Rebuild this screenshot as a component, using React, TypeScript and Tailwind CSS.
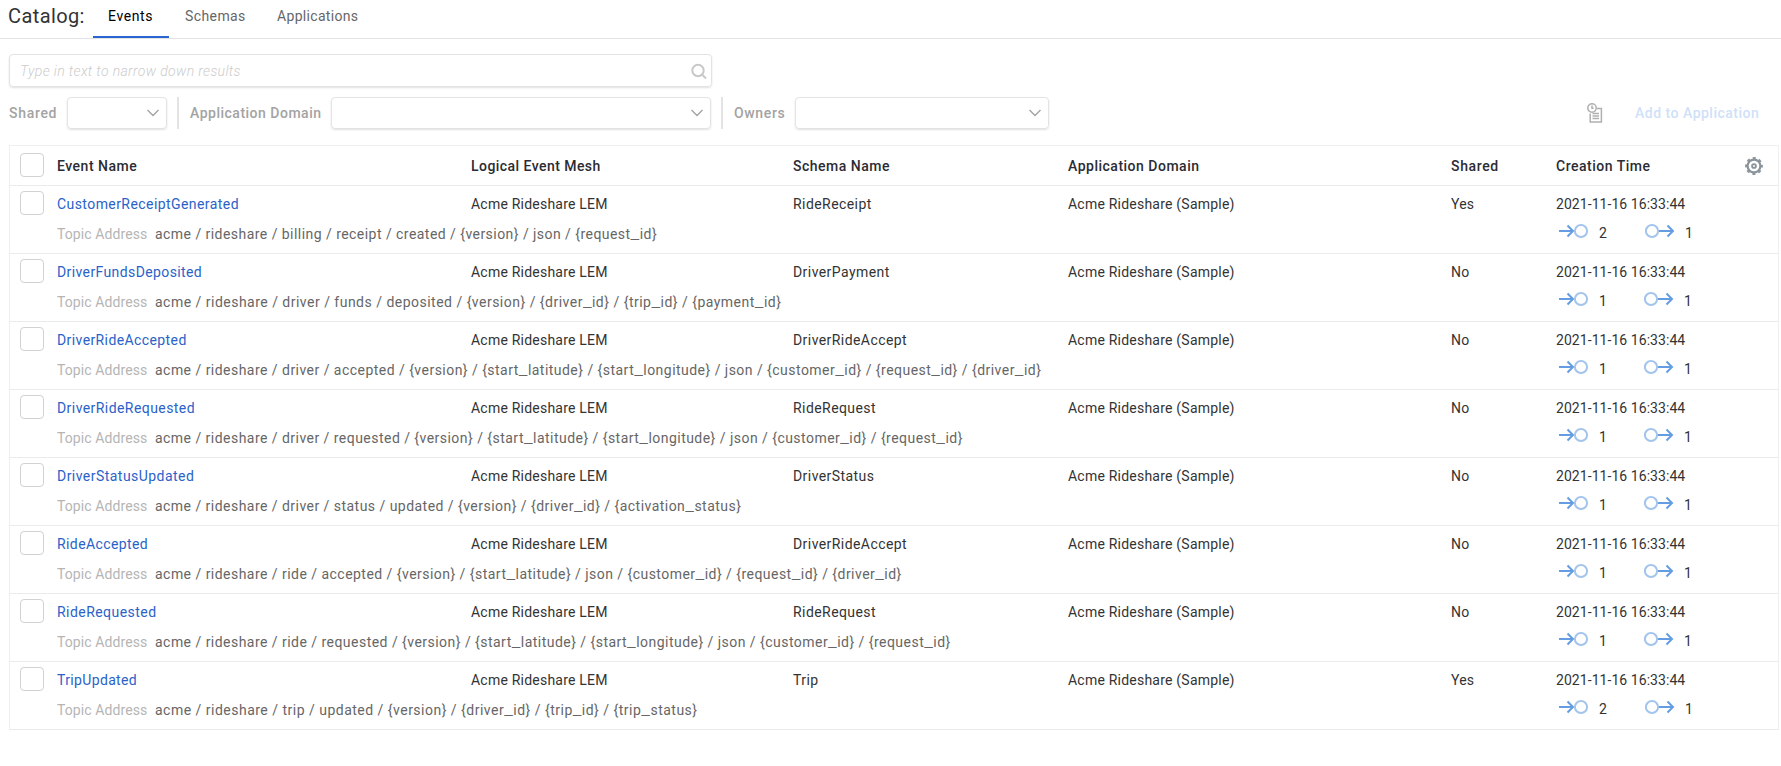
import React from "react";

type EventRow = {
  name: string;
  nameSpacing: string;
  schema: string;
  shared: string;
  topic: string;
  topicSpacing: string;
  published: number;
  subscribed: number;
};

const rows: EventRow[] = [
  { name: "CustomerReceiptGenerated", nameSpacing: "tracking-[0.43px]", schema: "RideReceipt", shared: "Yes", topic: "acme / rideshare / billing / receipt / created / {version} / json / {request_id}", topicSpacing: "tracking-[0.455px]", published: 2, subscribed: 1 },
  { name: "DriverFundsDeposited", nameSpacing: "tracking-[0.39px]", schema: "DriverPayment", shared: "No", topic: "acme / rideshare / driver / funds / deposited / {version} / {driver_id} / {trip_id} / {payment_id}", topicSpacing: "tracking-[0.485px]", published: 1, subscribed: 1 },
  { name: "DriverRideAccepted", nameSpacing: "tracking-[0.4px]", schema: "DriverRideAccept", shared: "No", topic: "acme / rideshare / driver / accepted / {version} / {start_latitude} / {start_longitude} / json / {customer_id} / {request_id} / {driver_id}", topicSpacing: "tracking-[0.467px]", published: 1, subscribed: 1 },
  { name: "DriverRideRequested", nameSpacing: "tracking-[0.43px]", schema: "RideRequest", shared: "No", topic: "acme / rideshare / driver / requested / {version} / {start_latitude} / {start_longitude} / json / {customer_id} / {request_id}", topicSpacing: "tracking-[0.465px]", published: 1, subscribed: 1 },
  { name: "DriverStatusUpdated", nameSpacing: "tracking-[0.46px]", schema: "DriverStatus", shared: "No", topic: "acme / rideshare / driver / status / updated / {version} / {driver_id} / {activation_status}", topicSpacing: "tracking-[0.465px]", published: 1, subscribed: 1 },
  { name: "RideAccepted", nameSpacing: "tracking-[0.4px]", schema: "DriverRideAccept", shared: "No", topic: "acme / rideshare / ride / accepted / {version} / {start_latitude} / json / {customer_id} / {request_id} / {driver_id}", topicSpacing: "tracking-[0.467px]", published: 1, subscribed: 1 },
  { name: "RideRequested", nameSpacing: "tracking-[0.45px]", schema: "RideRequest", shared: "No", topic: "acme / rideshare / ride / requested / {version} / {start_latitude} / {start_longitude} / json / {customer_id} / {request_id}", topicSpacing: "tracking-[0.467px]", published: 1, subscribed: 1 },
  { name: "TripUpdated", nameSpacing: "tracking-[0.35px]", schema: "Trip", shared: "Yes", topic: "acme / rideshare / trip / updated / {version} / {driver_id} / {trip_id} / {trip_status}", topicSpacing: "tracking-[0.49px]", published: 2, subscribed: 1 },
];

const columns = "grid grid-cols-[47px_414px_322px_275px_382px_106px_1fr]";

function Select({ className }: { className: string }) {
  return (
    <div className={`flex h-8 items-center justify-end rounded-[4px] border border-[#e3e3e3] pr-[7px] shadow-[0_1px_2px_rgba(0,0,0,0.12)] ${className}`}>
      <svg width="12" height="8" viewBox="0 0 12 8" fill="none" stroke="#a3a3a3" strokeWidth="1.4">
        <path d="M0.5 1 L6 6.5 L11.5 1" />
      </svg>
    </div>
  );
}

function Checkbox() {
  return <span className="block size-6 rounded-[4px] border border-[#d2d2d2] bg-white" />;
}

// Underscores are set wider so that placeholder names stay legible.
function Topic({ value }: { value: string }) {
  return (
    <>
      {value.split("_").map((part, i) => (
        <React.Fragment key={i}>
          {i > 0 && <span className="text-[20px] leading-[0] font-light tracking-[0.45px]">_</span>}
          {part}
        </React.Fragment>
      ))}
    </>
  );
}

function InIcon() {
  return (
    <svg width="30" height="16" viewBox="0 0 30 16" fill="none">
      <path d="M0 8 H14 M8.5 2.5 L14 8 L8.5 13.5" stroke="#659de2" strokeWidth="2" />
      <circle cx="22" cy="8" r="6.1" stroke="#a3c4ec" strokeWidth="2" />
    </svg>
  );
}

function OutIcon() {
  return (
    <svg width="30" height="16" viewBox="0 0 30 16" fill="none">
      <path d="M14 8 H28 M22.5 2.5 L28 8 L22.5 13.5" stroke="#659de2" strokeWidth="2" />
      <circle cx="7" cy="8" r="6.1" stroke="#a3c4ec" strokeWidth="2" />
    </svg>
  );
}

function GearIcon() {
  return (
    <svg width="18" height="18" viewBox="0 0 18 18" fill="none" stroke="#8a949c">
      <circle cx="9" cy="9" r="6.4" strokeWidth="2.2" />
      <circle cx="9" cy="9" r="7.9" strokeWidth="2" strokeDasharray="3.1 3.104" strokeDashoffset="1.55" />
      <circle cx="9" cy="9" r="1.9" strokeWidth="1.9" />
    </svg>
  );
}

export default function App() {
  return (
    <div className="h-[766px] w-[1781px] overflow-hidden bg-white font-['Roboto',sans-serif] text-sm leading-5 text-[#333]">
      <header className="flex h-[39px] border-b border-[#e3e3e3] pl-2">
        <h1 className="w-[85px] pt-1 text-[20px] leading-6 tracking-[0.4px] whitespace-nowrap text-[#333]">Catalog:</h1>
        <nav className="flex whitespace-nowrap">
          <span className="h-[38px] w-[76px] border-b-2 border-[#2a66d1] pt-[6px] pl-[15px] tracking-[0.6px] text-black">Events</span>
          <span className="w-[92px] pt-[6px] pl-4 tracking-[0.4px] text-[#666]">Schemas</span>
          <span className="pt-[6px] pl-4 tracking-[0.32px] text-[#666]">Applications</span>
        </nav>
      </header>

      <div className="pt-[15px] pl-[9px]">
        <div className="flex h-[33px] w-[703px] items-center justify-between rounded-[4px] border border-[#e3e3e3] pr-1 pl-[10px] shadow-[0_1px_2px_rgba(0,0,0,0.12)]">
          <span className="pt-px font-light tracking-[0.36px] text-[#ccc] italic">Type in text to narrow down results</span>
          <svg width="16" height="16" viewBox="0 0 16 16" fill="none" stroke="#c8c8c8" strokeWidth="2">
            <circle cx="7" cy="7.5" r="5.7" />
            <path d="M11 11.5 L15 15.5" />
          </svg>
        </div>
      </div>

      <div className="mt-[10px] flex h-8 items-center pl-[9px] font-medium tracking-[0.5px] whitespace-nowrap text-[#a3a3a3]">
        <span className="w-[58px] tracking-[0.7px]">Shared</span>
        <Select className="w-[100px]" />
        <span className="mr-[11px] ml-[10px] h-8 w-[2px] bg-[#e3e3e3]" />
        <span className="w-[141px]">Application Domain</span>
        <Select className="w-[380px]" />
        <span className="mr-[11px] ml-[10px] h-8 w-[2px] bg-[#e3e3e3]" />
        <span className="w-[61px] tracking-[0.65px]">Owners</span>
        <Select className="w-[254px]" />
        <svg className="ml-[538px]" width="16" height="20" viewBox="0 0 16 20" fill="none" stroke="#b0b0b0" strokeWidth="1.5">
          <circle cx="5" cy="5" r="4.2" />
          <path d="M5 2.5 V5.3 H6.6 M10 5.4 H14.4 V19 H3.2 V10.5 M5.5 10.5 H12 M5.5 13 H12 M5.5 15.5 H12" />
        </svg>
        <span className="-mt-px ml-8 text-[#cfe1f8]">Add to Application</span>
      </div>

      <section className="mt-4 ml-[9px] w-[1770px] border-x border-t border-[#efefef]">
        <div className={`${columns} h-10 items-center border-b border-[#ebebeb] font-medium tracking-[0.5px] text-[#2b2b33]`}>
          <span className="-mt-px pl-[10px]"><Checkbox /></span>
          <span>Event Name</span>
          <span className="tracking-[0.45px]">Logical Event Mesh</span>
          <span>Schema Name</span>
          <span>Application Domain</span>
          <span className="pl-px tracking-[0.65px]">Shared</span>
          <span className="flex items-center justify-between pr-[15px]">
            Creation Time
            <GearIcon />
          </span>
        </div>
        {rows.map((row) => (
          <div key={row.name} className="h-[68px] border-b border-[#ebebeb] pt-[5px] whitespace-nowrap">
            <div className={`${columns} h-6`}>
              <span className="pl-[10px]"><Checkbox /></span>
              <span className={`pt-[3px] text-[#2a62c9] ${row.nameSpacing}`}>{row.name}</span>
              <span className="pt-[3px] tracking-[0.22px]">Acme Rideshare LEM</span>
              <span className="pt-[3px] tracking-[0.43px]">{row.schema}</span>
              <span className="pt-[3px] tracking-[0.22px]">Acme Rideshare (Sample)</span>
              <span className="pt-[3px] pl-px tracking-[0.2px]">{row.shared}</span>
              <span className="pt-[3px] tracking-[0.06px]">2021-11-16 16:33:44</span>
            </div>
            <div className={`${columns} mt-[9px]`}>
              <div className="col-span-5 col-start-2 flex">
                <span className="w-[98px] tracking-[0.1px] text-[#b5b5b5]">Topic Address</span>
                <span className={`text-[#666] ${row.topicSpacing}`}><Topic value={row.topic} /></span>
              </div>
              <div className="-mt-px flex pl-[3px]">
                <InIcon />
                <span className={`pl-[10px] ${row.published === 2 ? "w-[56px]" : "w-[55px]"}`}>{row.published}</span>
                <OutIcon />
                <span className="pl-[10px]">{row.subscribed}</span>
              </div>
            </div>
          </div>
        ))}
      </section>
    </div>
  );
}
